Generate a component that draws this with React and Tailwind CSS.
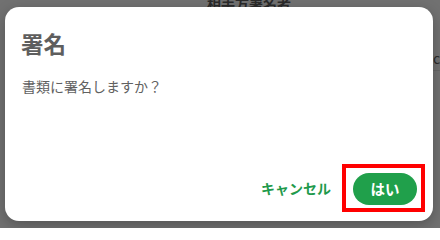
export default function App() {
  return (
    <div className="relative h-[228px] w-[440px] overflow-hidden bg-[#717171]" style={{ fontFamily: '"Noto Sans CJK JP", "Noto Sans", sans-serif' }}>
      {/* page behind the overlay */}
      <div className="absolute left-[207px] top-[-7px] text-[14px] font-bold text-[#2a2a2a]">相手方署名者</div>
      <div className="absolute left-[433px] top-[48px] text-[14px] text-[#2a2a2a]">c</div>
      <div className="absolute left-[433px] top-[70px] h-px w-[10px] bg-[#666]" />

      <div className="relative ml-[5px] mt-[7px] flex h-[214px] w-[428px] flex-col rounded-[14px] bg-white shadow-[0_4px_14px_rgba(0,0,0,0.25)]">
        <h2 className="pl-[16px] pt-[20px] text-[22.5px] font-bold leading-[32px] text-[#5e5e5e]">署名</h2>
        <p className="pl-[17px] pt-[17px] text-[14px] leading-[20px] text-[#616161]">書類に署名しますか？</p>
        <div className="mt-auto mb-[9px] mr-[8px] flex items-center justify-end gap-[11px]">
          <button className="text-[14px] font-bold text-[#1f9a4c]">キャンセル</button>
          <div className="border-4 border-[#ff0000] pb-[3px] pl-[7px] pr-[4px] pt-[5px]">
            <button className="flex h-[32px] w-[64px] items-center justify-center rounded-full bg-[#20a04b] text-[14.5px] font-bold text-white">はい</button>
          </div>
        </div>
      </div>
    </div>
  )
}
